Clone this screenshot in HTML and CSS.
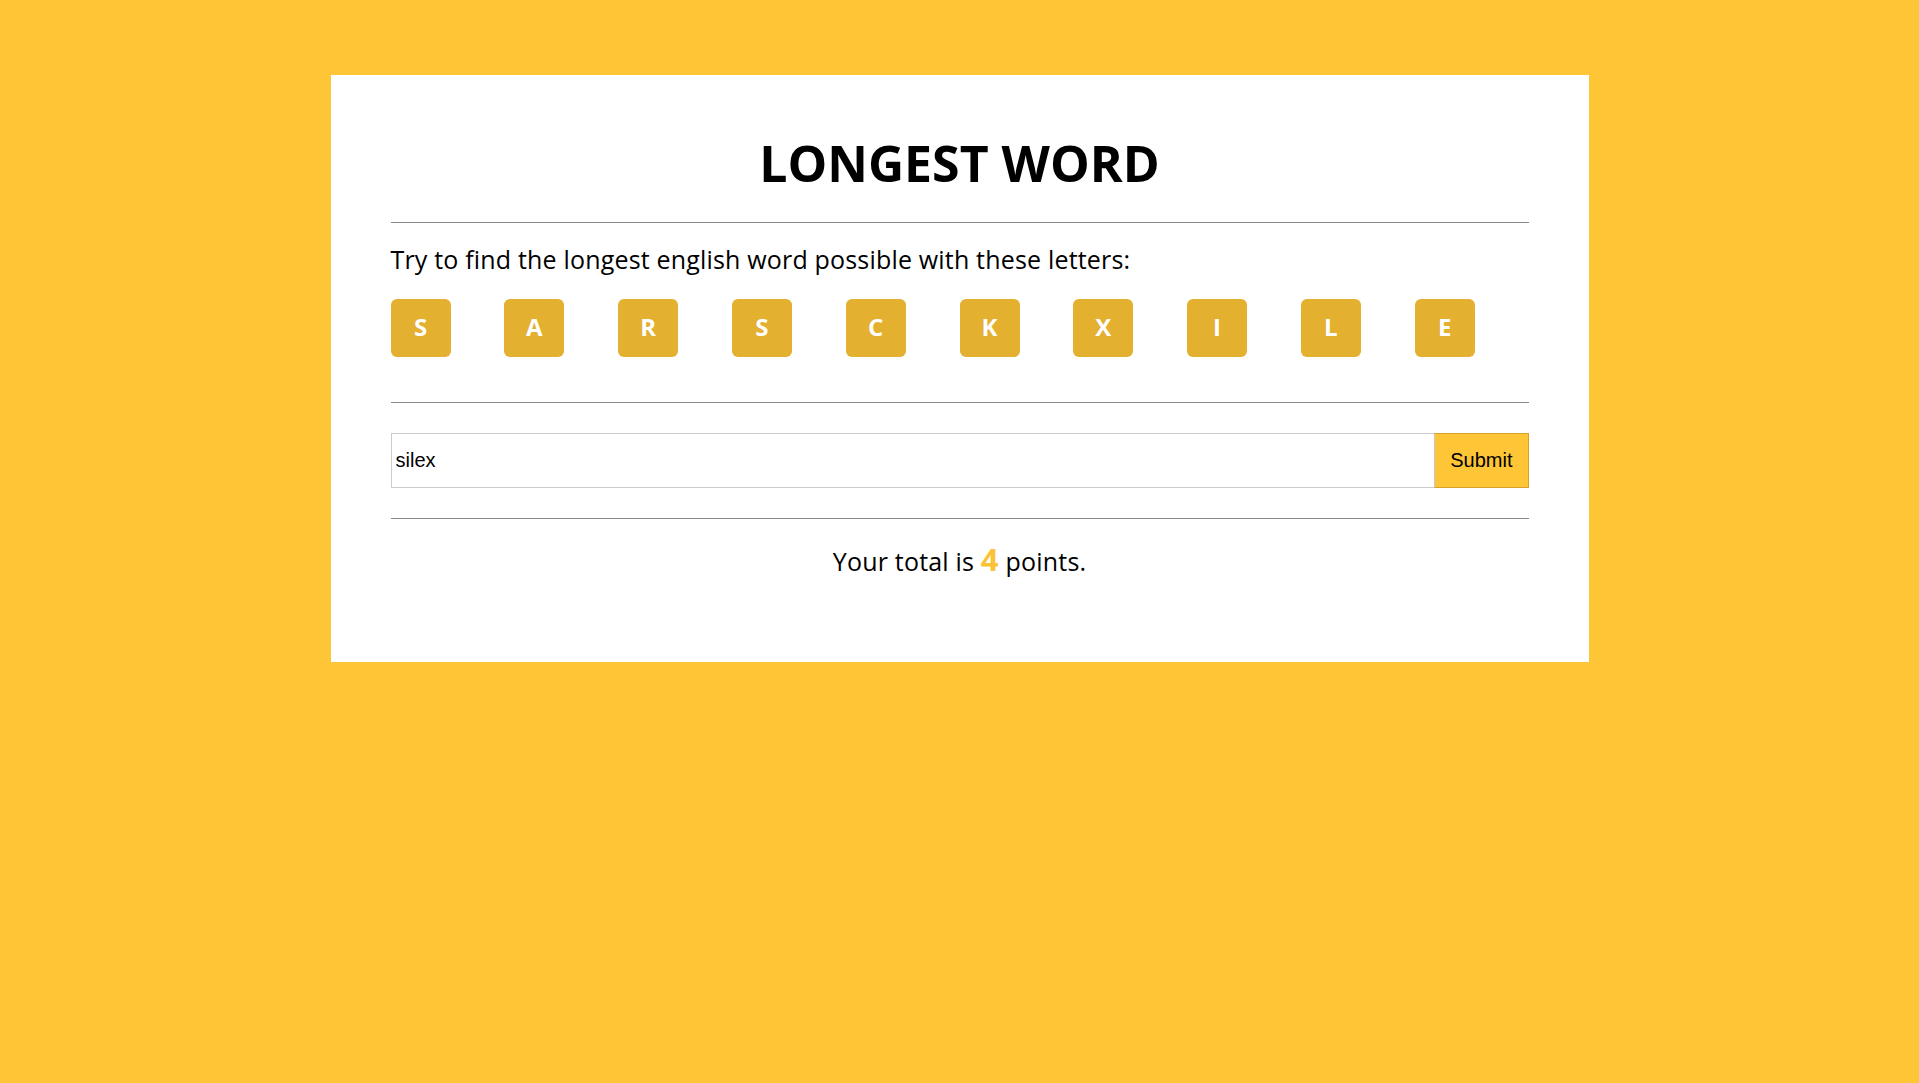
FILE: index.html
```html
<!DOCTYPE html>
<html lang="en">
<head>
<meta charset="utf-8">
<title>Longest Word</title>
<link rel="stylesheet" href="styles.css">
</head>
<body>
  <main class="card">
    <h1 class="title">LONGEST WORD</h1>
    <div class="rule rule-title"></div>
    <p class="intro">Try to find the longest english word possible with these letters:</p>
    <div class="letters">
      <div class="cell"><span class="tile">S</span></div>
      <div class="cell"><span class="tile">A</span></div>
      <div class="cell"><span class="tile">R</span></div>
      <div class="cell"><span class="tile">S</span></div>
      <div class="cell"><span class="tile">C</span></div>
      <div class="cell"><span class="tile">K</span></div>
      <div class="cell"><span class="tile">X</span></div>
      <div class="cell"><span class="tile">I</span></div>
      <div class="cell"><span class="tile">L</span></div>
      <div class="cell"><span class="tile">E</span></div>
    </div>
    <div class="rule rule-letters"></div>
    <form class="guess">
      <input class="guess-input" type="text" value="silex">
      <button class="guess-submit" type="button">Submit</button>
    </form>
    <div class="rule rule-form"></div>
    <p class="result">Your total is <span class="score">4</span> points.</p>
  </main>
</body>
</html>
```

FILE: styles.css
```css
html, body {
  margin: 0;
  padding: 0;
  background: #fec536;
}

body {
  padding-top: 75px;
  font-family: "Open Sans", "DejaVu Sans", sans-serif;
  color: #000;
}

.card {
  width: 1258px;
  box-sizing: border-box;
  margin: 0 auto;
  background: #fff;
  padding: 58px 60px 86px;
}

.title {
  margin: 0;
  font-size: 50px;
  line-height: 60px;
  font-weight: 700;
  text-align: center;
}

.rule {
  height: 1px;
  background: #8a8a8a;
}

.rule-title {
  margin-top: 29px;
}

.intro {
  margin: 21px 0 0;
  font-size: 25px;
  line-height: 30px;
  letter-spacing: 0.18px;
}

.letters {
  margin-top: 25px;
  display: grid;
  grid-template-columns: repeat(10, 1fr);
}

.tile {
  display: flex;
  align-items: center;
  justify-content: center;
  width: 60px;
  height: 58px;
  padding-bottom: 3px;
  box-sizing: border-box;
  border-radius: 6px;
  background: #e3b030;
  color: #fff;
  font-weight: 700;
  font-size: 24px;
}

.rule-letters {
  margin-top: 45px;
}

.guess {
  margin: 30px 0 0;
  display: flex;
}

.guess-input {
  flex: 1;
  height: 55px;
  box-sizing: border-box;
  margin: 0;
  border: 1px solid #cccccc;
  border-right: none;
  padding: 0 4px;
  font-family: "Liberation Sans", Arial, sans-serif;
  font-size: 20px;
  color: #000;
  outline: none;
}

.guess-submit {
  height: 55px;
  box-sizing: border-box;
  margin: 0;
  padding: 0 15px;
  border: 1px solid #d6a229;
  border-left: 1px solid #c9c9c9;
  background: #fec536;
  font-family: "Liberation Sans", Arial, sans-serif;
  font-size: 20px;
  color: #000;
  cursor: pointer;
}

.rule-form {
  margin-top: 30px;
}

.result {
  margin: 27px 0 0;
  font-size: 25px;
  line-height: 30px;
  letter-spacing: 0.2px;
  text-align: center;
}

.score {
  color: #fcc134;
  font-weight: 700;
  font-size: 31px;
  line-height: 0;
}
```
